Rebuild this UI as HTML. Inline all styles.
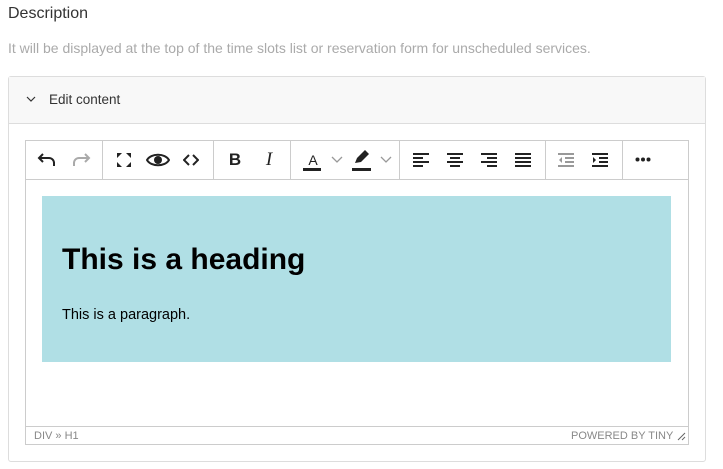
<!DOCTYPE html>
<html><head><style>
body{margin:0;width:723px;height:469px;background:#fff;font-family:"Liberation Sans",sans-serif;position:relative;overflow:hidden}
.a{position:absolute}
.ic{position:absolute;top:0;height:38px;display:flex;align-items:center;justify-content:center}
.sep{position:absolute;top:0;width:1px;height:38px;background:#ccc}
</style></head><body>
<div class="a" style="left:8px;top:5px;font-size:16px;color:#333">Description</div>
<div class="a" style="left:8px;top:40px;font-size:14px;color:#aaa;white-space:nowrap">It will be displayed at the top of the time slots list or reservation form for unscheduled services.</div>
<div class="a" style="left:8px;top:76px;width:696px;height:384px;border:1px solid #ddd;border-radius:3px"></div>
<div class="a" style="left:9px;top:77px;width:696px;height:46px;background:#f8f8f8;border-bottom:1px solid #ddd"></div>
<svg class="a" style="left:26px;top:96px" width="10" height="7"><path d="M1 1L5 5L9 1" stroke="#333" fill="none" stroke-width="1.2"/></svg>
<div class="a" style="left:49px;top:92px;font-size:13.5px;color:#333">Edit content</div>
<div class="a" style="left:25px;top:140px;width:662px;height:303px;border:1px solid #ccc"></div>
<div class="a" style="left:26px;top:141px;width:662px;height:38px;border-bottom:1px solid #ccc">
 <svg class="a" style="left:11px;top:9px" width="20" height="20"><path d="M6 4L2 8L6 12M2 8H12a5 5 0 0 1 5 5v3" stroke="#222" fill="none" stroke-width="2"/></svg>
 <svg class="a" style="left:45px;top:9px" width="20" height="20"><path d="M14 4L18 8L14 12M18 8H8a5 5 0 0 0-5 5v3" stroke="#aaa" fill="none" stroke-width="2"/></svg>
 <div class="sep" style="left:76px"></div>
 <svg class="a" style="left:89px;top:10px" width="18" height="18"><path d="M2 2h5l-5 5zM16 2h-5l5 5zM2 16h5l-5-5zM16 16h-5l5-5z" fill="#222"/></svg>
 <svg class="a" style="left:120px;top:9px" width="24" height="20"><path d="M1 10C5 3 19 3 23 10C19 17 5 17 1 10Z" stroke="#222" stroke-width="2" fill="none"/><circle cx="12" cy="10" r="4" fill="#222"/></svg>
 <svg class="a" style="left:157px;top:12px" width="16" height="14"><path d="M6 2L1 7L6 12M10 2L15 7L10 12" stroke="#222" stroke-width="2" fill="none"/></svg>
 <div class="sep" style="left:187px"></div>
 <div class="ic" style="left:200px;width:18px;font-weight:bold;font-size:17px;color:#222">B</div>
 <div class="ic" style="left:234px;width:18px;font-style:italic;font-family:'Liberation Serif',serif;font-size:19px;color:#222">I</div>
 <div class="sep" style="left:264px"></div>
 <div class="ic" style="left:277px;width:20px;font-size:14px;color:#222;padding-bottom:4px">A</div>
 <div class="a" style="left:277px;top:27px;width:18px;height:3px;background:#222"></div>
 <svg class="a" style="left:305px;top:15px" width="12" height="8"><path d="M1 1L6 6L11 1" stroke="#999" fill="none" stroke-width="1.3"/></svg>
 <svg class="a" style="left:326px;top:9px" width="20" height="16"><path d="M3 13l2-5 8-8 4 4-8 8z" fill="#222"/></svg>
 <div class="a" style="left:326px;top:27px;width:19px;height:3px;background:#222"></div>
 <svg class="a" style="left:354px;top:15px" width="12" height="8"><path d="M1 1L6 6L11 1" stroke="#999" fill="none" stroke-width="1.3"/></svg>
 <div class="sep" style="left:373px"></div>
 <svg class="a" style="left:387px;top:12px" width="16" height="14"><path d="M0 1h16M0 5h10M0 9h16M0 13h10" stroke="#222" stroke-width="2"/></svg>
 <svg class="a" style="left:421px;top:12px" width="16" height="14"><path d="M0 1h16M3 5h10M0 9h16M3 13h10" stroke="#222" stroke-width="2"/></svg>
 <svg class="a" style="left:455px;top:12px" width="16" height="14"><path d="M0 1h16M6 5h10M0 9h16M6 13h10" stroke="#222" stroke-width="2"/></svg>
 <svg class="a" style="left:489px;top:12px" width="16" height="14"><path d="M0 1h16M0 5h16M0 9h16M0 13h16" stroke="#222" stroke-width="2"/></svg>
 <div class="sep" style="left:519px"></div>
 <svg class="a" style="left:532px;top:12px" width="16" height="14"><path d="M0 1h16M7 5h9M7 9h9M0 13h16" stroke="#999" stroke-width="2"/><path d="M4 4L1 7L4 10z" fill="#999"/></svg>
 <svg class="a" style="left:566px;top:12px" width="16" height="14"><path d="M0 1h16M7 5h9M7 9h9M0 13h16" stroke="#222" stroke-width="2"/><path d="M1 4L4 7L1 10z" fill="#222"/></svg>
 <div class="sep" style="left:596px"></div>
 <svg class="a" style="left:609px;top:16px" width="16" height="5"><circle cx="2.5" cy="2.5" r="2" fill="#222"/><circle cx="8" cy="2.5" r="2" fill="#222"/><circle cx="13.5" cy="2.5" r="2" fill="#222"/></svg>
</div>
<div class="a" style="left:42px;top:196px;width:629px;height:166px;background:#b0dfe5"></div>
<div class="a" style="left:62px;top:243px;font-size:30px;font-weight:bold;color:#000;white-space:nowrap">This is a heading</div>
<div class="a" style="left:62px;top:307px;font-size:14.5px;color:#000">This is a paragraph.</div>
<div class="a" style="left:26px;top:426px;width:662px;height:1px;background:#ccc"></div>
<div class="a" style="left:34px;top:430px;font-size:11px;color:#888">DIV » H1</div>
<div class="a" style="left:571px;top:430px;font-size:11px;color:#888">POWERED BY TINY</div>
<svg class="a" style="left:677px;top:432px" width="9" height="9"><path d="M8 1L1 8M8 5L5 8" stroke="#666" stroke-width="1"/></svg>
</body></html>
